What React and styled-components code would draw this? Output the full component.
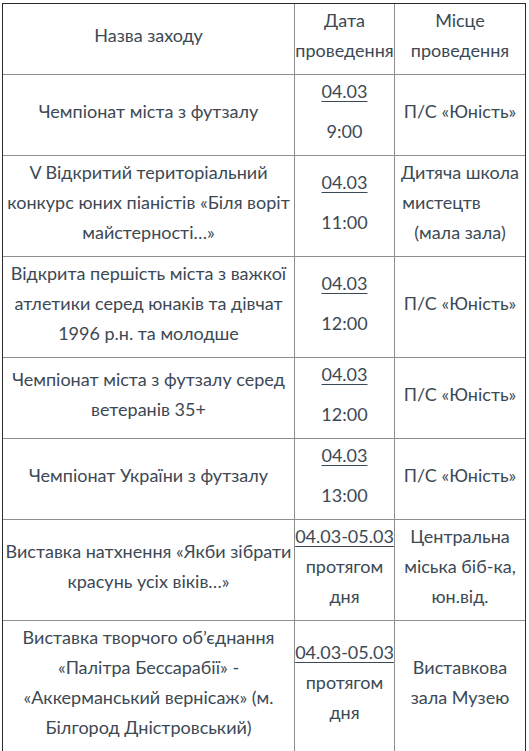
import React from 'react';
import styled, { createGlobalStyle } from 'styled-components';

const GlobalStyle = createGlobalStyle`
    body {
        margin: 0;
        background: #fff;
        font-family: Lato, "Open Sans", sans-serif;
    }
`

const Page = styled.div`
    padding: 3px 0 0 2px;
`

const Table = styled.div`
    display: grid;
    grid-template-columns: 291px 99px 130px;
    gap: 1px;
    width: max-content;
    background: #8e8e8e;
    border: 1px solid #2a2a2a;
    border-bottom: none;
`

const Cell = styled.div`
    background: #fff;
    display: flex;
    flex-direction: column;
    justify-content: center;
    align-items: center;
    text-align: center;
    padding: 1px 0 9px;
    font-size: 18px;
    line-height: 30px;
    color: #3c4955;
    white-space: nowrap;
`

const DateLink = styled.a`
    color: #3c4955;
    text-decoration: underline;
    text-underline-offset: 3px;
    text-decoration-thickness: 1px;
    margin-bottom: ${p => (p.$gap ? '10px' : '0')};
`

const Line = styled.span`
    display: block;
`

const rows = [
    {
        name: ['Чемпіонат міста з футзалу'],
        date: '04.03',
        time: ['9:00'],
        place: ['П/С «Юність»'],
    },
    {
        name: ['V Відкритий територіальний', 'конкурс юних піаністів «Біля воріт', 'майстерності…»'],
        date: '04.03',
        time: ['11:00'],
        place: ['Дитяча школа', 'мистецтв\u00a0\u00a0\u00a0\u00a0\u00a0\u00a0\u00a0\u00a0', '(мала зала)'],
    },
    {
        name: ['Відкрита першість міста з важкої', 'атлетики серед юнаків та дівчат', '1996 р.н. та молодше'],
        date: '04.03',
        time: ['12:00'],
        place: ['П/С «Юність»'],
    },
    {
        name: ['Чемпіонат міста з футзалу серед', 'ветеранів 35+'],
        date: '04.03',
        time: ['12:00'],
        place: ['П/С «Юність»'],
    },
    {
        name: ['Чемпіонат України з футзалу'],
        date: '04.03',
        time: ['13:00'],
        place: ['П/С «Юність»'],
    },
    {
        name: ['Виставка натхнення «Якби зібрати', 'красунь усіх віків…»'],
        date: '04.03-05.03',
        time: ['протягом', 'дня'],
        place: ['Центральна', 'міська біб-ка,', 'юн.від.'],
        tight: true,
    },
    {
        name: ['Виставка творчого об’єднання', '«Палітра Бессарабії» -', '«Аккерманський вернісаж» (м.', 'Білгород Дністровський)'],
        date: '04.03-05.03',
        time: ['протягом', 'дня'],
        place: ['Виставкова', 'зала Музею'],
        tight: true,
    },
]

function Lines({ items }) {
    return items.map((t, i) => <Line key={i}>{t}</Line>)
}

export default function App() {
    return (
        <Page>
            <GlobalStyle />
            <Table>
                <Cell>Назва заходу</Cell>
                <Cell><Lines items={['Дата', 'проведення']} /></Cell>
                <Cell><Lines items={['Місце', 'проведення']} /></Cell>
                {rows.map((r, i) => (
                    <React.Fragment key={i}>
                        <Cell><Lines items={r.name} /></Cell>
                        <Cell>
                            <DateLink href="#" $gap={!r.tight}>{r.date}</DateLink>
                            <Lines items={r.time} />
                        </Cell>
                        <Cell><Lines items={r.place} /></Cell>
                    </React.Fragment>
                ))}
            </Table>
        </Page>
    );
}
